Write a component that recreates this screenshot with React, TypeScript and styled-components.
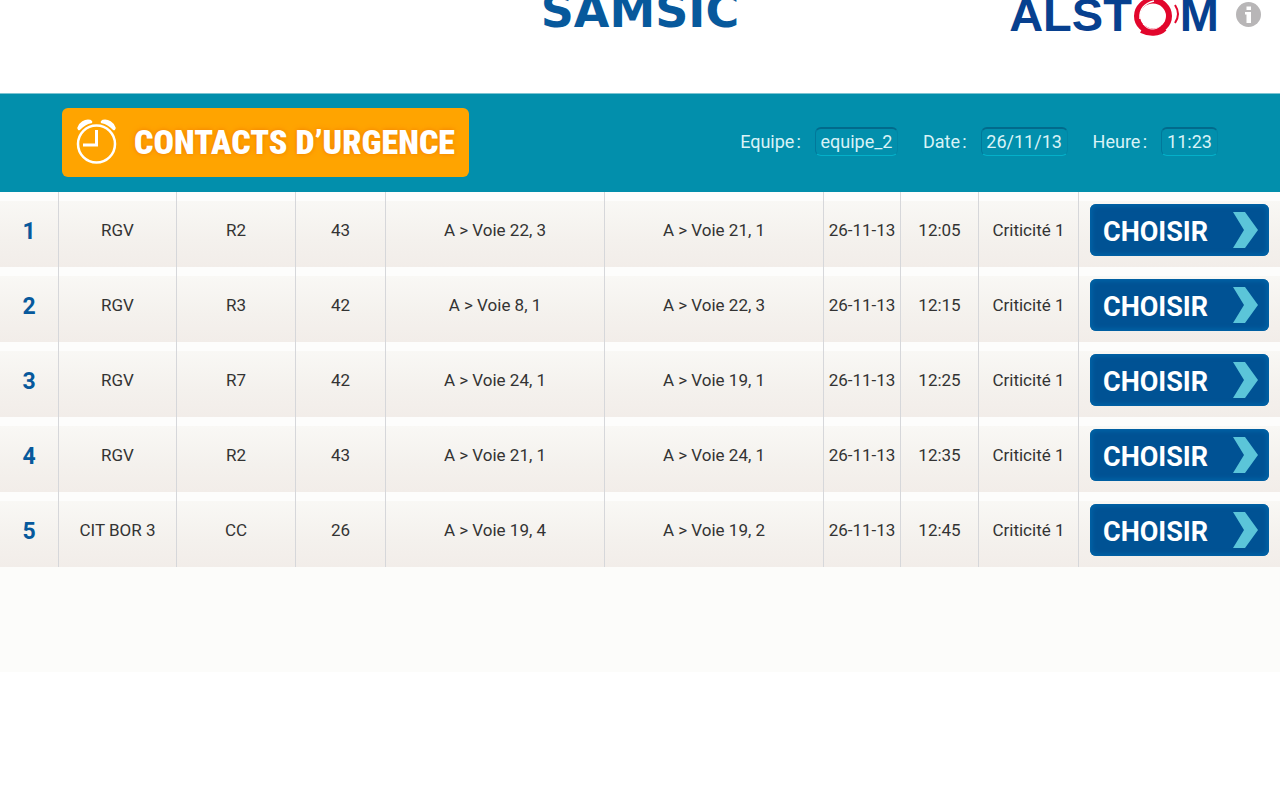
import React from "react";
import styled, { createGlobalStyle } from "styled-components";

const GlobalStyle = createGlobalStyle`
  *, *::before, *::after { box-sizing: border-box; }
  body {
    margin: 0;
    background: #ffffff;
    color: #333333;
    font-family: Roboto, "Liberation Sans", sans-serif;
    font-size: 17px;
  }
`;

const Brands = styled.header`
  display: grid;
  grid-template-columns: 1fr auto 1fr;
  align-items: start;
  height: 93px;
  padding: 0 19px;
  overflow: hidden;
`;

const Samsic = styled.div`
  grid-column: 2;
  color: #07599c;
  font: 700 46px/22px "DejaVu Sans", sans-serif;
`;

const Partner = styled.div`
  display: flex;
  justify-content: flex-end;
  gap: 17px;
`;

const Alstom = styled.div`
  display: flex;
  color: #07408f;
  font: 700 47px/30px "Liberation Sans", Arial, sans-serif;
`;

const Ring = styled.svg`
  display: block;
  width: 48px;
  height: 36px;
`;

const InfoButton = styled.button`
  width: 25px;
  height: 28px;
  padding: 1px 0 0;
  border: 0;
  background: none;
  cursor: pointer;

  svg { display: block; }
`;

const Banner = styled.section`
  display: flex;
  align-items: center;
  justify-content: space-between;
  height: 99px;
  padding: 0 62px 2px;
  background: #028fac;
  border-top: 1px solid #7cc4d2;
`;

const Title = styled.h1`
  display: flex;
  align-items: center;
  gap: 17px;
  height: 69px;
  margin: 0;
  padding: 0 14px;
  border-radius: 6px;
  background: #ffa400;
  color: #ffffff;
  font: 900 34px/40px "Roboto Condensed", "Liberation Sans Narrow", "Liberation Sans", sans-serif;
  text-shadow: 0 0 5px #f07c00;
  white-space: nowrap;

  svg { display: block; }
`;

const Session = styled.form`
  display: flex;
  align-items: center;
  gap: 25px;
  padding-bottom: 1px;
`;

const Field = styled.label`
  display: flex;
  align-items: center;
  gap: 14px;
  color: #d9f3f7;
  font-size: 18px;
  line-height: 24px;
  white-space: nowrap;
`;

const Value = styled.input<{ $width: number }>`
  width: ${(p) => p.$width}px;
  height: 29px;
  padding: 0 0 2px;
  border: 1px solid #0286a4;
  border-top: 2px solid #026a8c;
  border-left-color: #02789a;
  border-bottom-color: #04b0c9;
  border-radius: 6px;
  background: transparent;
  color: #d9f3f7;
  font: inherit;
  text-align: center;
`;

const Panel = styled.main`
  padding-bottom: 105px;
  background: #fcfcfa;
`;

const Table = styled.table`
  width: 100%;
  border-collapse: separate;
  border-spacing: 0;
  table-layout: fixed;
`;

const Row = styled.tr`
  height: 75px;
`;

const Cell = styled.td`
  padding: 0;
  border-right: 1px solid #d6d7da;
  background: linear-gradient(#fdfdfc 0 9px, #f9f8f5 9px, #f4f1ed 48px, #f2ede9 75px);
  text-align: center;
  white-space: nowrap;

  &:last-child {
    padding: 0 11px;
    border-right: 0;
  }
`;

const Rank = styled(Cell).attrs({ as: "th", scope: "row" })`
  padding-top: 3px;
  color: #07599c;
  font-size: 23px;
  font-weight: 700;
`;

const ChooseButton = styled.button`
  display: flex;
  align-items: center;
  justify-content: space-between;
  width: 100%;
  height: 52px;
  padding: 2px 11px 0 13px;
  border: 0;
  border-radius: 6px;
  background: #005294;
  box-shadow: inset 0 0 5px 2px #0065a8;
  color: #ffffff;
  font: 700 27px/32px Roboto, "Liberation Sans", sans-serif;
  cursor: pointer;

  span { padding-top: 2px; }
`;

const widths = [59, 118, 119, 90, 219, 219, 77, 78, 100, 201];

const interventions = [
  ["RGV", "R2", "43", "A > Voie 22, 3", "A > Voie 21, 1", "26-11-13", "12:05", "Criticité 1"],
  ["RGV", "R3", "42", "A > Voie 8, 1", "A > Voie 22, 3", "26-11-13", "12:15", "Criticité 1"],
  ["RGV", "R7", "42", "A > Voie 24, 1", "A > Voie 19, 1", "26-11-13", "12:25", "Criticité 1"],
  ["RGV", "R2", "43", "A > Voie 21, 1", "A > Voie 24, 1", "26-11-13", "12:35", "Criticité 1"],
  ["CIT BOR 3", "CC", "26", "A > Voie 19, 4", "A > Voie 19, 2", "26-11-13", "12:45", "Criticité 1"],
];

const total = widths.reduce((sum, w) => sum + w, 0);

const AlarmClock = () => (
  <svg width="41" height="46" viewBox="0 0 41 46" fill="none" stroke="#fff" aria-hidden="true">
    <circle cx="20.500" cy="25" r="18.500" strokeWidth="2.500" />
    <path d="M20.500 11v15H7" strokeWidth="3" />
    <path d="M2.500 9C4 4 9 1 14 2l1 1C10 4 6 7 3 10z" fill="#fff" strokeWidth="2.500" strokeLinejoin="round" />
    <path d="M38.500 9C37 4 32 1 27 2l-1 1c5 1 9 4 12 7z" fill="#fff" strokeWidth="2.500" strokeLinejoin="round" />
  </svg>
);

const Chevron = () => (
  <svg width="25" height="37" viewBox="0 0 25 37" aria-hidden="true">
    <path d="M0 0h12l13 18-13 18H0l11-18z" fill="#5bc5d9" />
  </svg>
);

export default function App() {
  return (
    <>
      <GlobalStyle />
      <Brands>
        <Samsic>SAMSIC</Samsic>
        <Partner>
          <Alstom>
            <span>ALST</span>
            <Ring viewBox="0 0 48 36" fill="none" stroke="#e2062c" aria-label="O">
              <ellipse cx="21" cy="16" rx="16" ry="15.500" strokeWidth="6" />
              <path d="M8 19C7 9 13 3 22 1" stroke="#fff" strokeWidth="1.500" />
              <path d="M9 31c8 4 18 4 24-2" strokeWidth="4" />
              <path d="M11 24c6 8 17 6 21-3" stroke="#fff" strokeWidth="1" />
              <path d="M43 5c4 6 4 12 0 18" strokeWidth="2" />
            </Ring>
            <span>M</span>
          </Alstom>
          <InfoButton type="button" aria-label="Informations">
            <svg width="25" height="25" viewBox="0 0 25 25">
              <circle cx="12.500" cy="12.500" r="12.500" fill="#b8b6b7" />
              <path d="M10.500 4.500h4.500v3.500h-4.500zM9 10h6v11h-4.500v-8.500H9z" fill="#fff" />
            </svg>
          </InfoButton>
        </Partner>
      </Brands>
      <Banner>
        <Title>
          <AlarmClock />
          CONTACTS D’URGENCE
        </Title>
        <Session>
          <Field>
            {"Equipe\u202f:"}
            <Value $width={83} readOnly value="equipe_2" />
          </Field>
          <Field>
            {"Date\u202f:"}
            <Value $width={87} readOnly value="26/11/13" />
          </Field>
          <Field>
            {"Heure\u202f:"}
            <Value $width={57} readOnly value="11:23" />
          </Field>
        </Session>
      </Banner>
      <Panel>
        <Table>
          <colgroup>
            {widths.map((w, i) => (
              <col key={i} style={{ width: `${(w / total) * 100}%` }} />
            ))}
          </colgroup>
          <tbody>
            {interventions.map((cells, i) => (
              <Row key={i}>
                <Rank>{i + 1}</Rank>
                {cells.map((text, j) => (
                  <Cell key={j}>{text}</Cell>
                ))}
                <Cell>
                  <ChooseButton type="button">
                    <span>CHOISIR</span>
                    <Chevron />
                  </ChooseButton>
                </Cell>
              </Row>
            ))}
          </tbody>
        </Table>
      </Panel>
    </>
  );
}
